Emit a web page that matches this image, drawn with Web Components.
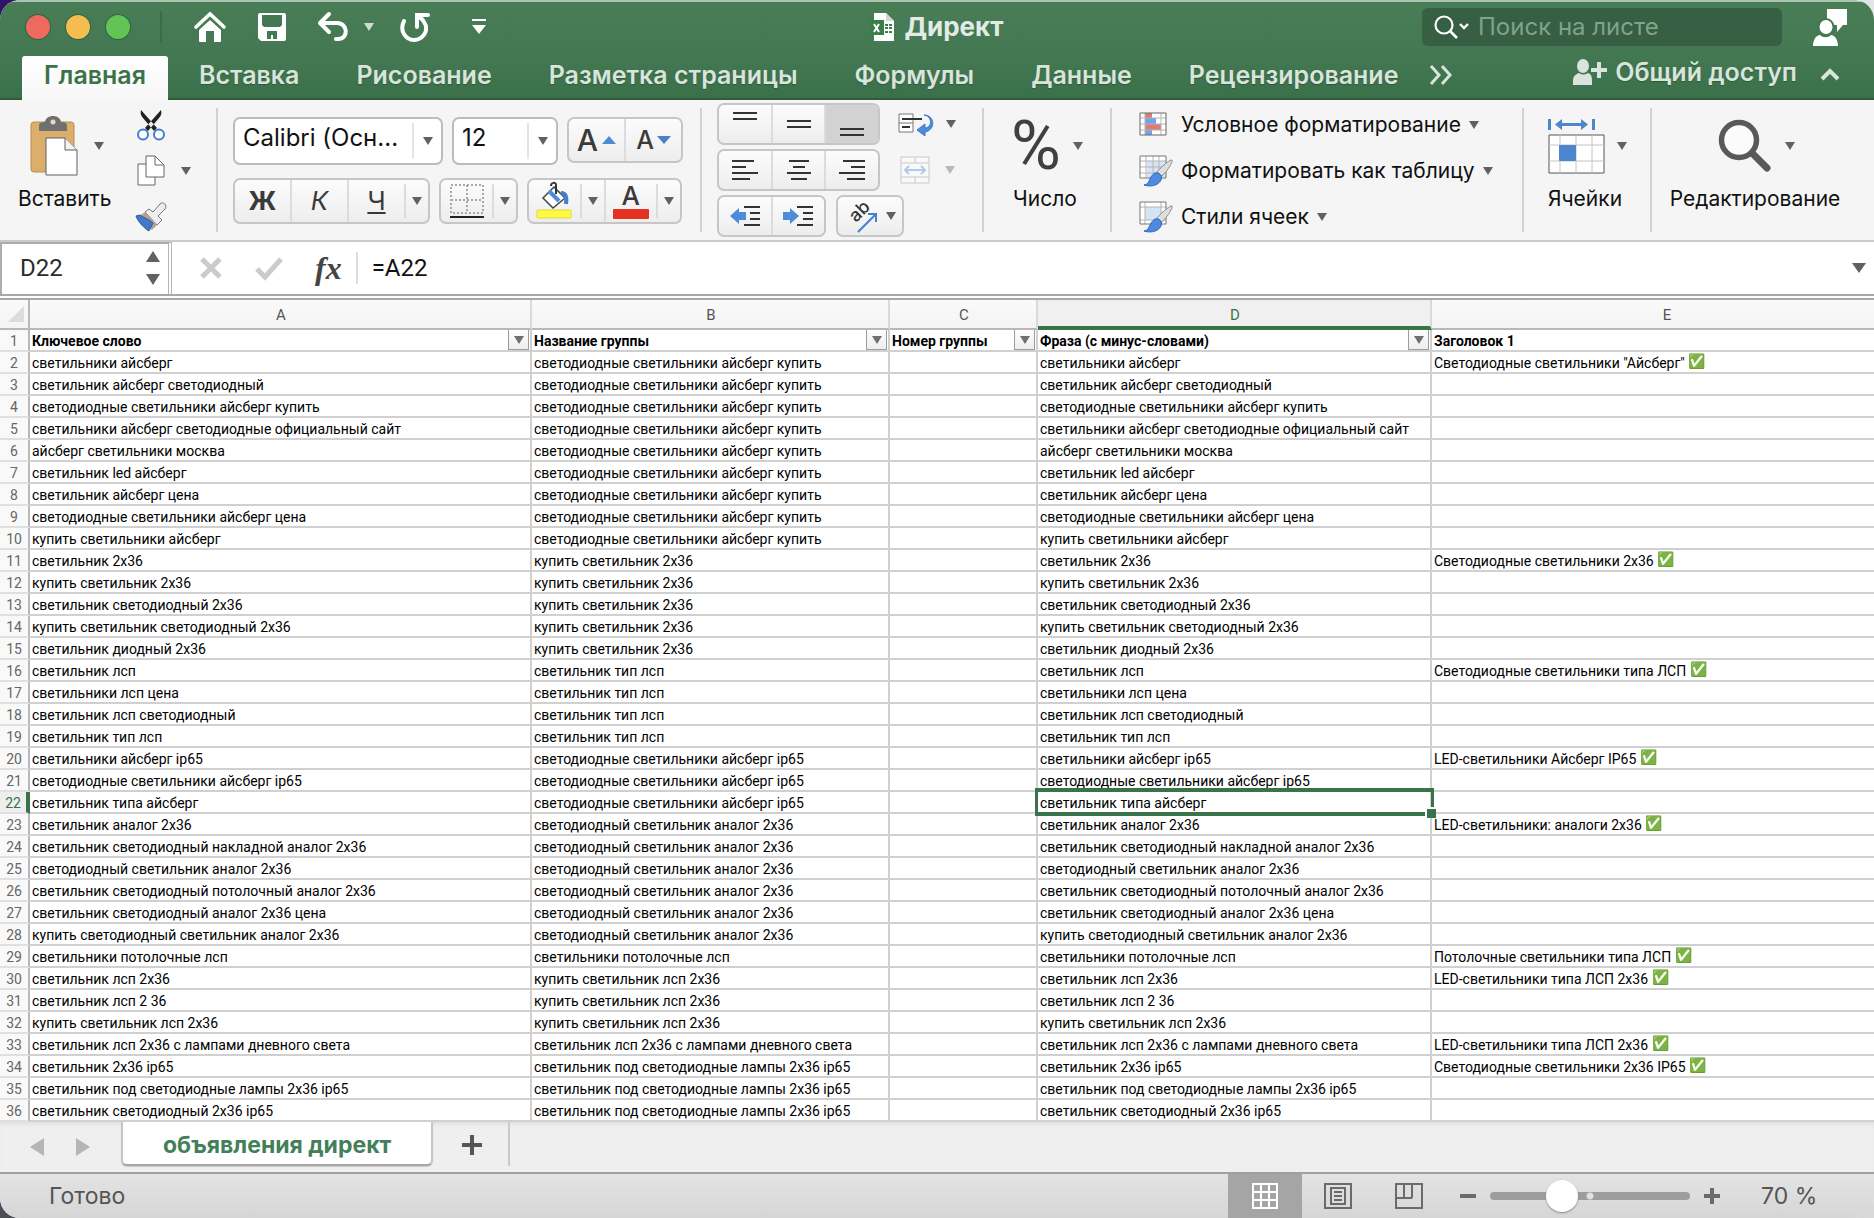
<!DOCTYPE html>
<html lang="ru">
<head>
<meta charset="utf-8">
<meta name="viewport" content="width=device-width, initial-scale=1">
<title>Директ</title>
<style>
  :root {
    --green: #3a7349;
    --ui: Inter, "Liberation Sans", sans-serif;
    --grid: Roboto, "Liberation Sans", sans-serif;
    --line: #d0d0d0;
  }
  body {
    margin: 0;
    font-family: var(--ui);
    background:
      linear-gradient(#32126b, #4d4d55) left / 50% 100% no-repeat,
      linear-gradient(#e4e4e8, #d8d8d8) right / 50% 100% no-repeat;
  }
</style>
</head>
<body>
<book-window>
  <title-bar slot="top"></title-bar>
  <ribbon-tabs slot="top"></ribbon-tabs>
  <ribbon-panel slot="top"></ribbon-panel>
  <formula-bar slot="top" cell="D22" formula="=A22"></formula-bar>
  <sheet-grid></sheet-grid>
  <sheet-tabs slot="bottom">объявления директ</sheet-tabs>
  <status-bar slot="bottom">Готово</status-bar>
</book-window>

<template id="tmpl-book-window">
  <style>
    :host {
      display: flex;
      flex-direction: column;
      min-height: 100vh;
      border-radius: 20px;
      overflow: hidden;
      background: #efefef;
    }
    main { flex: 1; }
  </style>
  <slot name="top"></slot>
  <main><slot></slot></main>
  <slot name="bottom"></slot>
</template>

<template id="tmpl-title-bar">
  <style>
    :host {
      display: grid;
      grid-template-columns: 1fr auto 1fr;
      align-items: center;
      height: 54px;
      padding-bottom: 2px;
      border-top: 2px solid #a9c4b1;
      box-sizing: border-box;
      background: linear-gradient(#487d56, #437853);
      color: #fff;
    }
    button { border: 0; padding: 0; background: none; color: inherit; display: flex; }
    .left { display: flex; align-items: center; padding-left: 26px; }
    .light { width: 24px; height: 24px; border-radius: 50%; margin-right: 16px; box-shadow: 0 0 0 1px #2f6540; }
    .red { background: #ee6a5f; }
    .yellow { background: #f5bd4f; }
    .lime { background: #61c454; }
    .rule { width: 2px; height: 32px; background: #3b6c49; margin: 0 32px 0 14px; }
    .gap { margin-left: 32px; }
    .list { margin-left: 16px; color: #cfdcd2; }
    .redo { margin-left: 26px; }
    .custom { margin-left: 42px; }
    h1 { display: flex; align-items: center; gap: 8px; margin: 0; font: 700 26px/32px var(--ui); color: #e3ebe5; }
    .right { display: flex; align-items: center; justify-content: flex-end; gap: 31px; padding-right: 25px; }
    label { display: flex; align-items: center; box-sizing: border-box; width: 360px; height: 38px; padding-left: 12px; border-radius: 6px; background: #365f43; }
    input { flex: 1; min-width: 0; margin-left: 8px; padding: 0; border: 0; background: none; font: 24px/30px var(--ui); color: #fff; }
    input::placeholder { color: #7fa48a; opacity: 1; }
  </style>
  <div class="left">
    <button class="light red" aria-label="Закрыть"></button>
    <button class="light yellow" aria-label="Свернуть"></button>
    <button class="light lime" aria-label="Развернуть"></button>
    <span class="rule"></span>
    <button aria-label="Домой"><x-icon name="home"></x-icon></button>
    <button class="gap" aria-label="Сохранить"><x-icon name="save"></x-icon></button>
    <button class="gap" aria-label="Отменить"><x-icon name="undo"></x-icon></button>
    <button class="list" aria-label="Список отмены"><drop-arrow></drop-arrow></button>
    <button class="redo" aria-label="Повторить"><x-icon name="redo"></x-icon></button>
    <button class="custom" aria-label="Настройка панели"><x-icon name="customize"></x-icon></button>
  </div>
  <h1><x-icon name="book"></x-icon>Директ</h1>
  <div class="right">
    <label><x-icon name="search"></x-icon><input type="search" placeholder="Поиск на листе" aria-label="Поиск на листе"></label>
    <button aria-label="Отзыв"><x-icon name="feedback"></x-icon></button>
  </div>
</template>

<template id="tmpl-ribbon-tabs">
  <style>
    :host {
      display: flex;
      height: 46px;
      background: linear-gradient(#437853, #3a7049);
      box-shadow: inset 0 -2px #2f5d3c;
      color: #d9e4dc;
    }
    nav { display: flex; flex: 1; gap: 5px; padding: 2px 0 0 22px; }
    button { border: 0; background: none; color: inherit; font: 600 25px/38px var(--ui); padding: 0 26px 6px; white-space: nowrap; text-shadow: 0 1px 1px #2c5a39; }
    .active { background: linear-gradient(#fff, #f7f7f7); color: var(--green); padding: 0 22px 6px; border-radius: 3px 3px 0 0; text-shadow: none; }
    .more { padding: 0 0 6px; display: flex; align-items: center; }
    .share { display: flex; align-items: center; gap: 8px; padding: 0 22px 10px 0; }
    .fold { display: flex; align-items: center; padding: 0 33px 6px 0; }
  </style>
  <nav>
    <button class="active">Главная</button>
    <button>Вставка</button>
    <button>Рисование</button>
    <button>Разметка страницы</button>
    <button>Формулы</button>
    <button>Данные</button>
    <button>Рецензирование</button>
    <button class="more" aria-label="Ещё вкладки"><x-icon name="more"></x-icon></button>
  </nav>
  <button class="share"><x-icon name="share"></x-icon>Общий доступ</button>
  <button class="fold" aria-label="Свернуть ленту"><x-icon name="fold"></x-icon></button>
</template>

<template id="tmpl-ribbon-group">
  <style>
    :host { display: flex; align-items: center; flex: none; height: 124px; box-sizing: border-box; border-right: 2px solid #d2d2d2; }
    :host(:last-of-type) { border-right: 0; }
  </style>
  <slot></slot>
</template>

<template id="tmpl-big-button">
  <style>
    :host { display: block; }
    button { display: flex; flex-direction: column; align-items: center; border: 0; padding: 0 0 10px; background: none; font: 21px/26px var(--ui); color: #111; white-space: nowrap; }
    .row { display: flex; align-items: center; gap: 12px; height: 56px; margin-bottom: 12px; padding-left: 4px; }
    drop-arrow { color: #616161; }
  </style>
  <button>
    <span class="row"><slot name="icon"></slot><drop-arrow></drop-arrow></span>
    <slot></slot>
  </button>
</template>

<template id="tmpl-drop-arrow">
  <style>
    :host { display: block; flex: none; width: 10px; height: 8px; }
    svg { display: block; }
  </style>
  <svg width="10" height="8" viewBox="0 0 10 8"><path d="M0 0h10L5 8z" fill="currentColor"/></svg>
</template>

<template id="tmpl-ribbon-panel">
  <style>
    :host {
      display: flex;
      align-items: center;
      height: 142px;
      box-sizing: border-box;
      border-bottom: 2px solid #cacaca;
      background: #f5f5f5;
      font-family: var(--ui);
      overflow: hidden;
    }
    drop-arrow { color: #616161; }
    button { border: 0; padding: 0; background: none; display: flex; align-items: center; justify-content: center; font-family: inherit; color: #3a3a3a; }
    .clip { width: 218px; padding-left: 18px; }
    .font { width: 484px; padding-left: 15px; }
    .align { width: 282px; padding-left: 15px; }
    .center { width: 128px; justify-content: center; padding-right: 4px; }
    .styles { width: 412px; padding-left: 27px; }
    .edit { flex: 1; justify-content: center; padding-right: 16px; }
    .stack { display: flex; flex-direction: column; }
    .tools { margin-left: 24px; padding-top: 2px; }
    .tools .line { justify-content: flex-start; gap: 14px; }
    .line { display: flex; align-items: center; height: 46px; }
    .tool { width: 32px; }
    .pair { display: flex; gap: 9px; }
    .rows { gap: 13px; }
    .combo { display: flex; align-items: center; box-sizing: border-box; height: 48px; padding-right: 8px; border: 2px solid #bcbcbc; border-radius: 7px; background: #fff; }
    .combo select { flex: 1; min-width: 0; appearance: none; border: 0; background: none; padding: 0 0 5px 8px; font: 24px/30px var(--ui); color: #111; }
    .tick { width: 2px; height: 36px; margin-right: 9px; background: #e4e4e4; }
    .family { width: 210px; }
    .size { width: 106px; }
    .seg { display: flex; box-sizing: border-box; height: 46px; border: 2px solid #c6c6c6; border-radius: 7px; background: linear-gradient(#fcfcfc, #ededed); overflow: hidden; }
    .seg button { flex: 1; }
    .seg button + button:not(.thin) { border-left: 2px solid #dcdcdc; }
    .seg .thin { flex: 0 0 24px; margin: 4px 0; border-left: 2px solid #dcdcdc; }
    .seg.low { height: 42px; }
    .seg .on { background: #d2d2d2; }
    .w2 { width: 109px; }
    .w3 { width: 163px; }
    .letter { font-size: 26px; line-height: 32px; }
    .over { font-size: 26px; line-height: 26px; font-weight: 500; }
    .grow { font-size: 30px; line-height: 36px; font-weight: 500; gap: 4px; }
    .shrink { font-size: 25px; line-height: 36px; font-weight: 500; gap: 3px; }
    .align .line { gap: 18px; }
    .wide { gap: 13px; }
    .align .last { gap: 10px; }
    .turn { gap: 8px; }
    .dim { opacity: .4; }
    .percent { font: 68px/56px Roboto, sans-serif; color: #404040; }
    .style { gap: 8px; font-size: 21px; line-height: 26px; color: #111; justify-content: flex-start; height: 46px; padding-top: 2px; white-space: nowrap; }
  </style>

  <ribbon-group class="clip">
    <big-button><x-icon slot="icon" name="paste"></x-icon>Вставить</big-button>
    <div class="stack tools">
      <div class="line"><button class="tool" aria-label="Вырезать"><x-icon name="cut"></x-icon></button></div>
      <div class="line"><button class="tool" aria-label="Копировать"><x-icon name="copy"></x-icon></button><button aria-label="Варианты копирования"><drop-arrow></drop-arrow></button></div>
      <div class="line"><button class="tool" aria-label="Формат по образцу"><x-icon name="painter"></x-icon></button></div>
    </div>
  </ribbon-group>

  <ribbon-group class="font">
    <div class="stack rows">
      <div class="pair">
        <span class="combo family"><select aria-label="Шрифт"><option>Calibri (Осн...</option></select><i class="tick"></i><drop-arrow></drop-arrow></span>
        <span class="combo size"><select aria-label="Размер шрифта"><option>12</option></select><i class="tick"></i><drop-arrow></drop-arrow></span>
        <span class="seg" style="width: 116px">
          <button class="grow" aria-label="Увеличить шрифт">A<x-icon name="up"></x-icon></button>
          <button class="shrink" aria-label="Уменьшить шрифт">A<x-icon name="down"></x-icon></button>
        </span>
      </div>
      <div class="pair">
        <span class="seg" style="width: 197px">
          <button class="letter"><b>Ж</b></button>
          <button class="letter"><em>К</em></button>
          <button class="letter"><u>Ч</u></button>
          <button class="thin" aria-label="Вид подчёркивания"><drop-arrow></drop-arrow></button>
        </span>
        <span class="seg" style="width: 79px">
          <button aria-label="Границы"><x-icon name="border"></x-icon></button>
          <button class="thin" aria-label="Виды границ"><drop-arrow></drop-arrow></button>
        </span>
        <span class="seg" style="width: 155px">
          <button aria-label="Цвет заливки"><x-icon name="fill"></x-icon></button>
          <button class="thin" aria-label="Выбор заливки"><drop-arrow></drop-arrow></button>
          <button class="stack" aria-label="Цвет шрифта"><span class="over">A</span><x-icon name="redbar"></x-icon></button>
          <button class="thin" aria-label="Выбор цвета шрифта"><drop-arrow></drop-arrow></button>
        </span>
      </div>
    </div>
  </ribbon-group>

  <ribbon-group class="align">
    <div class="stack">
      <div class="line">
        <span class="seg low w3">
          <button aria-label="По верхнему краю"><x-icon name="top"></x-icon></button>
          <button aria-label="Посередине"><x-icon name="middle"></x-icon></button>
          <button class="on" aria-label="По нижнему краю"><x-icon name="bottom"></x-icon></button>
        </span>
        <button class="wide" aria-label="Перенос текста"><x-icon name="wrap"></x-icon><drop-arrow></drop-arrow></button>
      </div>
      <div class="line">
        <span class="seg low w3">
          <button aria-label="По левому краю"><x-icon name="left"></x-icon></button>
          <button aria-label="По центру"><x-icon name="centered"></x-icon></button>
          <button aria-label="По правому краю"><x-icon name="right"></x-icon></button>
        </span>
        <button class="wide dim" aria-label="Объединить ячейки" disabled><x-icon name="merge"></x-icon><drop-arrow></drop-arrow></button>
      </div>
      <div class="line last">
        <span class="seg low w2">
          <button aria-label="Уменьшить отступ"><x-icon name="outdent"></x-icon></button>
          <button aria-label="Увеличить отступ"><x-icon name="indent"></x-icon></button>
        </span>
        <span class="seg low" style="width: 68px"><button class="turn" aria-label="Ориентация"><x-icon name="orient"></x-icon><drop-arrow></drop-arrow></button></span>
      </div>
    </div>
  </ribbon-group>

  <ribbon-group class="center">
    <big-button><span slot="icon" class="percent">%</span>Число</big-button>
  </ribbon-group>

  <ribbon-group class="styles">
    <div class="stack">
      <button class="style"><x-icon name="conditional"></x-icon>Условное форматирование<drop-arrow></drop-arrow></button>
      <button class="style"><x-icon name="astable"></x-icon>Форматировать как таблицу<drop-arrow></drop-arrow></button>
      <button class="style"><x-icon name="cellstyle"></x-icon>Стили ячеек<drop-arrow></drop-arrow></button>
    </div>
  </ribbon-group>

  <ribbon-group class="center">
    <big-button><x-icon slot="icon" name="cells"></x-icon>Ячейки</big-button>
  </ribbon-group>

  <ribbon-group class="edit">
    <big-button><x-icon slot="icon" name="loupe"></x-icon>Редактирование</big-button>
  </ribbon-group>
</template>

<template id="tmpl-formula-bar">
  <style>
    :host { display: flex; align-items: stretch; height: 58px; box-sizing: border-box; background: #fff; border-bottom: 6px double #a8a8a8; }
    button { border: 0; padding: 0; background: none; display: flex; }
    input { border: 0; padding: 0; min-width: 0; background: none; font: 24px/32px var(--grid); color: #111; }
    .name { display: flex; align-items: center; width: 172px; box-sizing: border-box; padding: 0 8px 2px 18px; border: 2px solid #adadad; border-bottom: 0; border-right: 4px double #b4b4b4; }
    .name input { flex: 1; color: #2c2c2c; }
    .tools { display: flex; align-items: center; gap: 32px; padding-left: 27px; }
    .fx { font: italic bold 32px/36px "Liberation Serif", serif; color: #454545; }
    .value { flex: 1; margin-left: 14px; padding-left: 14px; align-self: center; border-left: 2px solid #ddd; }
    .open { align-self: center; margin-right: 8px; }
  </style>
  <label class="name"><input class="ref" aria-label="Имя ячейки"><x-icon name="stepper"></x-icon></label>
  <div class="tools">
    <button aria-label="Отмена"><x-icon name="cancel"></x-icon></button>
    <button aria-label="Ввод"><x-icon name="accept"></x-icon></button>
    <button class="fx" aria-label="Вставить функцию">fx</button>
  </div>
  <input class="value" aria-label="Строка формул">
  <button class="open" aria-label="Развернуть строку формул"><x-icon name="expand"></x-icon></button>
</template>

<template id="tmpl-sheet-grid">
  <style>
    :host { display: block; overflow: hidden; background: #fff; }
    table { width: 100%; table-layout: fixed; border-collapse: separate; border-spacing: 0; font: 14px/18px var(--grid); color: #000; }
    th, td { box-sizing: border-box; height: 22px; padding: 2px 0 0 2px; border-bottom: 2px solid var(--line); border-right: 2px solid var(--line); text-align: left; white-space: nowrap; overflow: hidden; }
    tr > :last-child { border-right: 0; }
    thead th { height: 30px; padding: 2px 0 0 2px; font-weight: 400; font-size: 15px; text-align: center; color: #555; background: linear-gradient(#fafafa, #f4f4f4); border-color: #b8b8b8; border-right-color: #dadada; }
    thead th:first-child { padding: 4px 4px 0 0; text-align: right; border-right-color: #b8b8b8; }
    thead th:last-child { padding-left: 28px; }
    thead th.on { color: var(--green); background: #f0f0f0; padding-top: 4px; border-bottom: 4px solid var(--green); }
    tbody th:first-child { padding-left: 0; text-align: center; font-weight: 400; color: #666; background: #f9f9f9; border-right-color: #b8b8b8; border-bottom-color: #e0e0e0; }
    tbody th.on { color: var(--green); background: #eee; border-right: 4px solid var(--green); }
    .head { display: flex; justify-content: space-between; height: 20px; margin-top: -2px; }
    .head span { padding-top: 2px; }
    .head button { display: flex; align-items: center; justify-content: center; box-sizing: border-box; width: 21px; height: 20px; margin-right: 1px; padding: 0; border: 1px solid #9c9c9c; border-top: 0; background: linear-gradient(#fdfdfd, #eee); color: #6f6f6f; }
    .tick { line-height: 14px; vertical-align: 2px; }
    td.on { position: relative; overflow: visible; }
    /* selection frame and its fill handle lie over the neighbouring cells */
    td.on::before { content: ""; position: absolute; inset: -4px -4px -4px -3px; border: 4px solid var(--green); border-width: 4px 3px; pointer-events: none; }
    td.on::after { content: ""; position: absolute; right: -6px; bottom: -6px; width: 9px; height: 9px; background: var(--green); border: 2px solid #fff; border-width: 2px 0 0 2px; }
    .r { width: 30px; } .a { width: 502px; } .b { width: 358px; } .c { width: 148px; } .d { width: 394px; }
    svg { display: inline-block; }
  </style>
  <table>
    <colgroup><col class="r"><col class="a"><col class="b"><col class="c"><col class="d"><col></colgroup>
    <thead><tr><th><svg width="16" height="16" viewBox="0 0 16 16"><path d="M16 0v16H0z" fill="#dcdcdc"/></svg></th><th>A</th><th>B</th><th>C</th><th class="on">D</th><th>E</th></tr></thead>
    <tbody></tbody>
  </table>
</template>

<template id="tmpl-sheet-tabs">
  <style>
    :host { display: flex; height: 52px; box-sizing: border-box; border-bottom: 2px solid #a0a0a0; background: #efefef; box-shadow: inset 0 4px 4px -2px #dedede; }
    button { border: 0; padding: 0; background: none; display: flex; align-items: center; }
    .nav { gap: 32px; display: flex; padding-left: 30px; width: 91px; }
    .tab { height: 44px; padding: 4px 40px 0; border: 2px solid #c6c6c6; border-top: 0; border-bottom-color: #a6a6a6; border-radius: 0 0 6px 6px; background: #fff; color: #43805a; font: 700 23px/32px var(--ui); white-space: nowrap; box-shadow: 0 1px 1px #ccc; }
    .add { height: 44px; padding: 2px 26px 0 29px; border-right: 2px solid #cacaca; }
  </style>
  <div class="nav">
    <button aria-label="Предыдущий лист"><x-icon name="prev"></x-icon></button>
    <button aria-label="Следующий лист"><x-icon name="next"></x-icon></button>
  </div>
  <button class="tab"><slot></slot></button>
  <button class="add" aria-label="Новый лист"><x-icon name="add"></x-icon></button>
</template>

<template id="tmpl-status-bar">
  <style>
    :host { display: flex; align-items: center; height: 44px; background: linear-gradient(#e3e3e3, #d6d6d6); font: 23px/30px var(--ui); color: #555; }
    .text { flex: 1; padding-left: 49px; }
    button { border: 0; padding: 0; background: none; color: #6a6a6a; display: flex; align-items: center; justify-content: center; }
    .view { width: 71px; height: 44px; }
    .view.on { width: 74px; background: #a5a5a5; color: #fff; }
    .step { margin: 0 14px 0 16px; }
    .step.plus { margin: 0 0 0 14px; }
    input { appearance: none; width: 200px; height: 32px; margin: 0; background: none; }
    input::-webkit-slider-runnable-track { height: 8px; border-radius: 4px; background: radial-gradient(circle at 100px 4px, #e0e0e0 3px, transparent 4px), #9d9d9d; }
    input::-webkit-slider-thumb { appearance: none; width: 32px; height: 32px; margin-top: -12px; border-radius: 50%; background: #fff; box-shadow: 0 1px 2px #888; }
    output { width: 113px; padding-left: 41px; }
  </style>
  <span class="text"><slot></slot></span>
  <button class="view on" aria-label="Обычный"><x-icon name="normal"></x-icon></button>
  <button class="view" aria-label="Разметка страницы"><x-icon name="page"></x-icon></button>
  <button class="view" aria-label="Страничный режим"><x-icon name="breaks"></x-icon></button>
  <button class="step" aria-label="Уменьшить масштаб"><x-icon name="minus"></x-icon></button>
  <input type="range" min="10" max="190" value="70" aria-label="Масштаб">
  <button class="step plus" aria-label="Увеличить масштаб"><x-icon name="plus"></x-icon></button>
  <output>70 %</output>
</template>

<script>
const BRUSH = '<path d="M33 5c-1-1-9 5-15 12l5 4C29 15 34 7 33 5z" fill="#dedede" stroke="#8c8c8c"/><path d="M5 30c6 0 5-9 11-12 4-1 8 3 6 7-3 6-11 7-17 5z" fill="#4d8be0" stroke="#2f66b8"/>';
const lines = (rows) => rows.map(([x, y, w]) => `<path d="M${x} ${y}h${w}" stroke="#333" stroke-width="2"/>`).join('');

// name: [width, height, markup]
const ICONS = {
  home: [32, 32, '<path d="M2 16 16 3l14 13" fill="none" stroke="#fff" stroke-width="3.6" stroke-linecap="round"/><path d="M5 19 16 9l11 10v11a1 1 0 0 1-1 1h-6V20h-8v11H6a1 1 0 0 1-1-1z" fill="#fff"/>'],
  save: [28, 28, '<path d="M2 0h24a2 2 0 0 1 2 2v24a2 2 0 0 1-2 2H3l-3-3V2a2 2 0 0 1 2-2z" fill="#fff"/><path d="M4 2h20v10l-2 2H6l-2-2zM9 18h10v8h-4v-4h-2v4H9z" fill="#437853"/>'],
  undo: [30, 30, '<path d="M11 2 2 11l9 9M3 11h16c11 0 12 16 1 16h-2" fill="none" stroke="#fff" stroke-width="4" stroke-linecap="round" stroke-linejoin="round"/>'],
  redo: [30, 30, '<path d="M4 9c-5 10 2 19 10 19s16-9 10-18c-1-2-3-4-5-5M17 15V3h11" fill="none" stroke="#fff" stroke-width="4" stroke-linecap="round"/>'],
  customize: [14, 16, '<path d="M0 0h14v2H0zM0 6h14l-7 9z" fill="#fff"/>'],
  book: [26, 30, '<path d="M4 1h12l8 8v20H4z" fill="#fff"/><path d="M16 1v8h8z" fill="#cfd8d1"/><path d="M0 8h14v15H0z" fill="#3a7e4b"/><path d="m4 12 5 8M9 12l-5 8" stroke="#fff" stroke-width="2"/><path d="M15 12h3v2h-3zm4 0h3v2h-3zm-4 3h3v2h-3zm4 0h3v2h-3zm-4 4h3v2h-3zm4 0h3v2h-3z" fill="#3a7e4b"/>'],
  search: [36, 26, '<circle cx="10" cy="11" r="8.500" fill="none" stroke="#fff" stroke-width="2.200"/><path d="m16 17 7 7" stroke="#fff" stroke-width="2.600"/><path d="m26 10 4 4 4-4" fill="none" stroke="#fff" stroke-width="2.400"/>'],
  feedback: [36, 38, '<path d="M14 1h20v16h-4l-6 7v-7H14z" fill="#fff"/><ellipse cx="13" cy="19" rx="7.500" ry="8" fill="#fff" stroke="#437853" stroke-width="2"/><path d="M0 38c0-6 3-11 7-11 3 3 8 3 11 0 4 0 7 5 7 11z" fill="#fff"/>'],
  more: [24, 20, '<path d="m2 1 8 9-8 9M13 1l8 9-8 9" fill="none" stroke="#d9e4dc" stroke-width="3"/>'],
  share: [34, 26, '<ellipse cx="10" cy="7" rx="6" ry="7" fill="#d9e4dc"/><path d="M0 26v-4c0-5 3-7 6-8 3 2 6 2 9 0 3 1 4 3 4 8v4zM24 3h4v6h6v4h-6v6h-4v-6h-6V9h6z" fill="#d9e4dc"/>'],
  fold: [22, 14, '<path d="m3 12 8-8 8 8" fill="none" stroke="#d9e4dc" stroke-width="4"/>'],
  paste: [52, 60, '<rect x="1" y="6" width="43" height="50" rx="3" fill="#dcae6c" stroke="#b98c4c"/><path d="M9 15V10c0-3 2-4 6-4 1-8 15-8 16 0 4 0 6 1 6 4v5z" fill="#707070"/><circle cx="23" cy="6" r="2.500" fill="#e8d9bf"/><path d="M16 22h19l12 12v25H16z" fill="#fff" stroke="#5e5e5e"/><path d="M35 22v12h12" fill="#f2f2f2" stroke="#5e5e5e"/>'],
  cut: [28, 32, '<path d="M4 1c-1 3 0 6 2 8l11 13 3-3zM24 1c1 3 0 6-2 8L11 22l-3-3z" fill="#222"/><circle cx="6" cy="25.500" r="5" fill="#fff" stroke="#3f7ed2" stroke-width="2"/><circle cx="22" cy="25.500" r="5" fill="#fff" stroke="#3f7ed2" stroke-width="2"/>'],
  copy: [28, 32, '<path d="M1 9h17v21H1z" fill="#fff" stroke="#666"/><path d="M9 1h9l9 9v12H9z" fill="#fff" stroke="#666"/><path d="M18 1v9h9" fill="none" stroke="#666"/>'],
  painter: [32, 30, '<path d="m18 10 7-8c3-3 8 1 5 5l-7 7 4 4-5 5-12-13 4-3z" fill="#eee" stroke="#777"/><path d="m10 10 12 13-5 5-14-13z" fill="#b7a08f"/><path d="m1 14 4-1c4 3 9 4 13 8l-4 8C9 26 3 20 1 14z" fill="#4179c6" stroke="#2d5ea3"/>'],
  up: [14, 10, '<path d="M0 9 7 1l7 8z" fill="#4f8bdb"/>'],
  down: [14, 10, '<path d="M0 1h14L7 9z" fill="#4a7fc9"/>'],
  border: [36, 36, '<path d="M2 2h32v28H2zM18 2v28M2 17h32" fill="none" stroke="#a8a8a8" stroke-width="2" stroke-dasharray="2 2"/><path d="M1 34h34" stroke="#222" stroke-width="2"/>'],
  fill: [36, 38, '<path d="m7 16 11-11 11 11-12 10z" fill="#fff" stroke="#444" stroke-width="1.500"/><path d="m13 9 10 10" stroke="#4f8bdb" stroke-width="4"/><path d="M20 12V3c0-3-5-3-5 1" fill="none" stroke="#333" stroke-width="2"/><path d="M25 11c5 0 6 4 5 11" fill="none" stroke="#3f7ed2" stroke-width="4"/><rect x="1" y="28" width="34" height="8" rx="1" fill="#fffb45" stroke="#dcd83a"/>'],
  redbar: [36, 10, '<rect width="36" height="10" rx="1" fill="#e53022"/>'],
  top: [26, 26, lines([[1, 2, 24], [1, 8, 24]])],
  middle: [26, 26, lines([[1, 10, 24], [1, 16, 24]])],
  bottom: [26, 26, lines([[1, 18, 24], [1, 24, 24]])],
  left: [26, 20, lines([[0, 1, 22], [0, 7, 14], [0, 13, 26], [0, 19, 18]])],
  centered: [26, 20, lines([[3, 1, 20], [7, 7, 12], [1, 13, 24], [5, 19, 16]])],
  right: [26, 20, lines([[4, 1, 22], [12, 7, 14], [0, 13, 26], [8, 19, 18]])],
  outdent: [30, 20, '<path d="M0 10 9 2v4h7v8H9v4z" fill="#4f8bdb"/>' + lines([[14, 1, 16], [20, 7, 10], [20, 13, 10], [14, 19, 16]])],
  indent: [30, 20, '<path d="m16 10-9-8v4H0v8h7v4z" fill="#4f8bdb"/>' + lines([[14, 1, 16], [20, 7, 10], [20, 13, 10], [14, 19, 16]])],
  wrap: [35, 24, '<path d="M1 2h14v18H1zM1 11h14" fill="#fff" stroke="#777"/><path d="M4 7h20M4 15h8" stroke="#333" stroke-width="2"/><path d="M26 3c8 1 9 12 1 13v-4l-8 6 8 6v-4c11-2 10-17-1-17z" fill="#4f8bdb" stroke="#3d78c7"/>'],
  merge: [34, 28, '<path d="M3 1h28v26H3zM3 7h28M3 21h28M17 1v6M17 21v6" fill="#fff" stroke="#888"/><path d="M8 14h18M11 10l-4 4 4 4M23 10l4 4-4 4" fill="none" stroke="#4f8bdb" stroke-width="2"/>'],
  orient: [34, 36, '<text x="0" y="0" transform="translate(12 25) rotate(-45)" font-family="Inter" font-size="18" font-weight="500" fill="#333">ab</text><path d="M14 34 31 17M24 16h8v8" fill="none" stroke="#4380cf" stroke-width="2"/>'],
  conditional: [34, 32, '<path d="M1 4h26v22H1z" fill="#fff"/><path d="M6 4h7v5H6zM6 15h16v6H6z" fill="#dd7a78"/><path d="M6 9h11v6H6zM6 21h7v5H6z" fill="#6fa3ea"/><path d="M1 9h26M1 15h26M1 21h26M6 4v22M22 4v22" stroke="#b5b5b5"/><path d="M1 4h26v22H1z" fill="none" stroke="#666"/>'],
  astable: [34, 32, '<path d="M1 1h26v22H1z" fill="#fff"/><path d="M8 6h19v17H8z" fill="#d5e3f5"/><path d="M1 6h26M1 12h26M1 18h26M7 1v22M14 1v22M20 1v22" stroke="#b5b5b5"/><path d="M1 1h26v22H1z" fill="none" stroke="#777"/>' + BRUSH],
  cellstyle: [34, 32, '<path d="M1 1h26v22H1z" fill="#fff"/><path d="M6 6h16v13H6z" fill="#d5e3f5"/><path d="M1 6h26M1 19h26M6 1v22M22 1v22" stroke="#b5b5b5"/><path d="M1 1h26v22H1z" fill="none" stroke="#777"/>' + BRUSH],
  cells: [58, 56, '<path d="M1 1h3v11H1zM45 1h3v11h-3zM8 6.500 15 1v4h19V1l7 5.500-7 5.500V8H15v4z" fill="#4d86cd"/><path d="M2 17h55v38H2z" fill="#fff" stroke="#555"/><path d="M13 17v38M29 17v38M45 17v38M2 27h55M2 43h55" stroke="#c4c4c4"/><rect x="12" y="27" width="17" height="16" rx="1" fill="#4d86cd"/>'],
  loupe: [54, 52, '<path d="m34 34 14 14" stroke="#595959" stroke-width="7" stroke-linecap="round"/><circle cx="20" cy="20" r="17.500" fill="#fbfbfb" stroke="#595959" stroke-width="5.500"/>'],
  stepper: [14, 36, '<path d="M0 12 7 1l7 11zM0 24h14L7 35z" fill="#616161"/>'],
  cancel: [24, 24, '<path d="m3 3 18 18M21 3 3 21" stroke="#cbcbcb" stroke-width="5"/>'],
  accept: [28, 24, '<path d="m2 13 8 8L26 3" fill="none" stroke="#cbcbcb" stroke-width="5"/>'],
  expand: [14, 10, '<path d="M0 0h14L7 10z" fill="#616161"/>'],
  prev: [14, 20, '<path d="M14 1v18L0 10z" fill="#b5b5b5"/>'],
  next: [14, 20, '<path d="M0 1v18l14-9z" fill="#b5b5b5"/>'],
  add: [20, 20, '<path d="M8 0h4v8h8v4h-8v8H8v-8H0V8h8z" fill="#555"/>'],
  minus: [16, 16, '<path d="M0 6h16v4H0z" fill="#6a6a6a"/>'],
  plus: [16, 16, '<path d="M6 0h4v6h6v4h-6v6H6v-6H0V6h6z" fill="#6a6a6a"/>'],
  normal: [26, 26, '<path d="M1 1h24v24H1zM9 1v24M17 1v24M1 9h24M1 17h24" fill="none" stroke="currentColor" stroke-width="2"/>'],
  page: [28, 26, '<path d="M1 1h26v24H1zM7 5h14v16H7zM10 9h8M10 13h8M10 17h8" fill="none" stroke="currentColor" stroke-width="2"/>'],
  breaks: [28, 26, '<path d="M1 1h26v24H1zM9 1v14M17 1v14M1 15h16" fill="none" stroke="currentColor" stroke-width="2"/>']
};

const ice = 'светодиодные светильники айсберг купить';
const buy = 'купить светильник 2х36';
const lsp = 'светильник тип лсп';
const ip = 'светодиодные светильники айсберг ip65';
const analog = 'светодиодный светильник аналог 2х36';
const lamps = 'светильник под светодиодные лампы 2х36 ip65';
// phrase, group, headline; column D repeats column A
const ROWS = [
  ['светильники айсберг', ice, 'Светодиодные светильники "Айсберг"'],
  ['светильник айсберг светодиодный', ice],
  ['светодиодные светильники айсберг купить', ice],
  ['светильники айсберг светодиодные официальный сайт', ice],
  ['айсберг светильники москва', ice],
  ['светильник led айсберг', ice],
  ['светильник айсберг цена', ice],
  ['светодиодные светильники айсберг цена', ice],
  ['купить светильники айсберг', ice],
  ['светильник 2х36', buy, 'Светодиодные светильники 2х36'],
  ['купить светильник 2х36', buy],
  ['светильник светодиодный 2х36', buy],
  ['купить светильник светодиодный 2х36', buy],
  ['светильник диодный 2х36', buy],
  ['светильник лсп', lsp, 'Светодиодные светильники типа ЛСП'],
  ['светильники лсп цена', lsp],
  ['светильник лсп светодиодный', lsp],
  ['светильник тип лсп', lsp],
  ['светильники айсберг ip65', ip, 'LED-светильники Айсберг IP65'],
  ['светодиодные светильники айсберг ip65', ip],
  ['светильник типа айсберг', ip],
  ['светильник аналог 2х36', analog, 'LED-светильники: аналоги 2х36'],
  ['светильник светодиодный накладной аналог 2х36', analog],
  ['светодиодный светильник аналог 2х36', analog],
  ['светильник светодиодный потолочный аналог 2х36', analog],
  ['светильник светодиодный аналог 2х36 цена', analog],
  ['купить светодиодный светильник аналог 2х36', analog],
  ['светильники потолочные лсп', 'светильники потолочные лсп', 'Потолочные светильники типа ЛСП'],
  ['светильник лсп 2х36', 'купить светильник лсп 2х36', 'LED-светильники типа ЛСП 2х36'],
  ['светильник лсп 2 36', 'купить светильник лсп 2х36'],
  ['купить светильник лсп 2х36', 'купить светильник лсп 2х36'],
  ['светильник лсп 2х36 с лампами дневного света', 'светильник лсп 2х36 с лампами дневного света', 'LED-светильники типа ЛСП 2х36'],
  ['светильник 2х36 ip65', lamps, 'Светодиодные светильники 2х36 IP65'],
  ['светильник под светодиодные лампы 2х36 ip65', lamps],
  ['светильник светодиодный 2х36 ip65', lamps]
];

class BaseElement extends HTMLElement {
  constructor() {
    super();
    this.root = this.attachShadow({ mode: 'open' });
    const tmpl = document.querySelector('#tmpl-' + this.localName);
    if (tmpl) {
      this.root.append(document.importNode(tmpl.content, true));
    }
  }
}

customElements.define('x-icon', class XIcon extends BaseElement {
  connectedCallback() {
    const [w, h, markup] = ICONS[this.getAttribute('name')];
    this.root.innerHTML = `
      <style>:host { display: block; flex: none; } svg { display: block; overflow: visible; }</style>
      <svg width="${w}" height="${h}" viewBox="0 0 ${w} ${h}" aria-hidden="true">${markup}</svg>`;
  }
});

customElements.define('formula-bar', class FormulaBar extends BaseElement {
  connectedCallback() {
    this.root.querySelector('.ref').value = this.getAttribute('cell');
    this.root.querySelector('.value').value = this.getAttribute('formula');
  }
});

customElements.define('sheet-grid', class SheetGrid extends BaseElement {
  connectedCallback() {
    const filter = '<button aria-label="Фильтр"><drop-arrow></drop-arrow></button>';
    const tick = ' <span class="tick">✅</span>';
    const heads = ['Ключевое слово', 'Название группы', 'Номер группы', 'Фраза (с минус-словами)', 'Заголовок 1'];
    const head = heads.map((t, i) => `<th scope="col"><div class="head"><span>${t}</span>${i < 4 ? filter : ''}</div></th>`).join('');
    const body = ROWS.map(([phrase, group, headline], i) => {
      const on = i + 2 === 22 ? ' class="on"' : '';
      return `<tr><th scope="row"${on}>${i + 2}</th><td>${phrase}</td><td>${group}</td><td></td><td${on}>${phrase}</td><td>${headline ? headline + tick : ''}</td></tr>`;
    }).join('');
    this.root.querySelector('tbody').innerHTML = `<tr><th scope="row">1</th>${head}</tr>${body}`;
  }
});

for (const name of ['drop-arrow', 'ribbon-group', 'big-button', 'book-window', 'title-bar', 'ribbon-tabs', 'ribbon-panel', 'sheet-tabs', 'status-bar']) {
  customElements.define(name, class extends BaseElement {});
}
</script>
</body>
</html>
